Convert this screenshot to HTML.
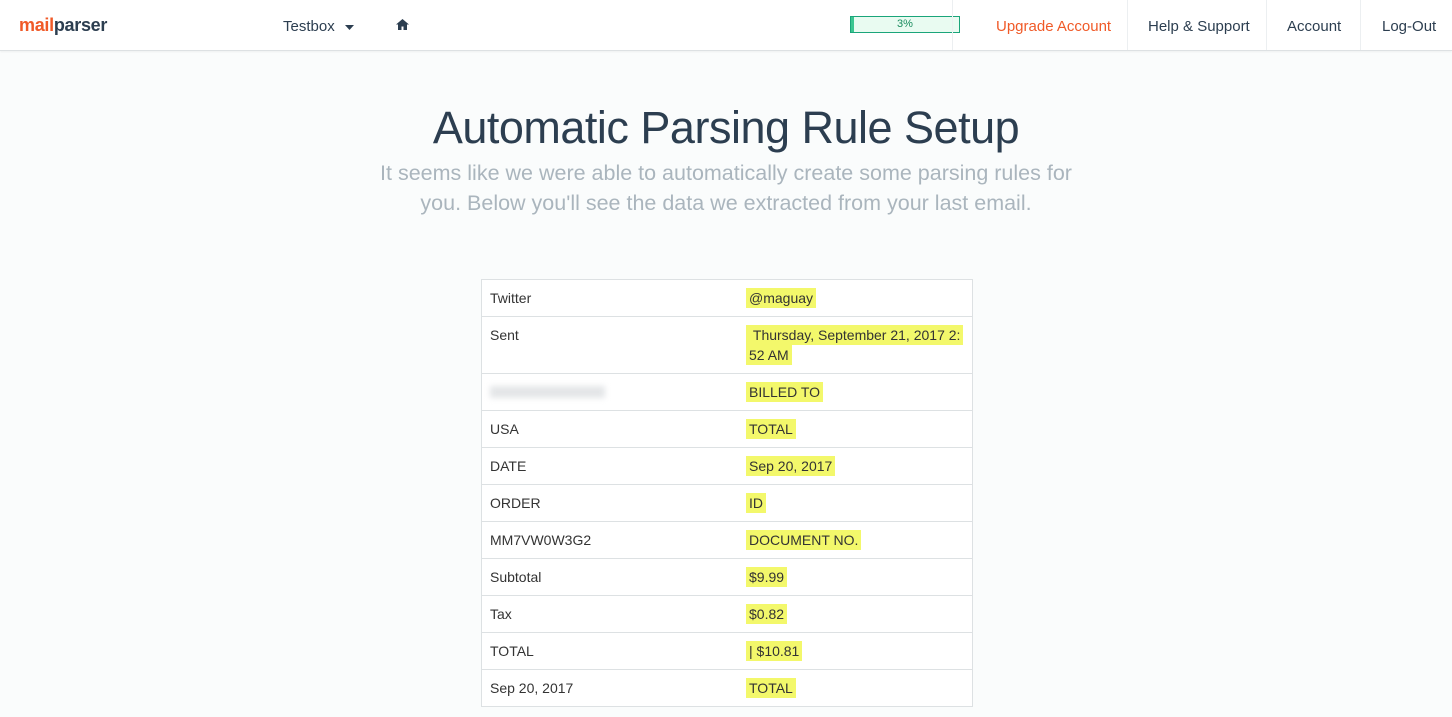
<!DOCTYPE html>
<html><head><meta charset="utf-8"><style>
body{margin:0;background:#fafcfc;font-family:"Liberation Sans",sans-serif;width:1452px;height:717px;overflow:hidden;position:relative}
.nav{position:absolute;left:0;top:0;width:1452px;height:50px;background:#fff;border-bottom:1px solid #dde1e3;box-shadow:0 1px 2px rgba(0,0,0,.05)}
.nav span{position:absolute;top:18px;font-size:15px;color:#2c3e50}
.logo{position:absolute;left:19px;top:15px;font-size:18px;font-weight:bold;letter-spacing:-0.3px}
.sep{position:absolute;top:0;width:1px;height:50px;background:#eceff1}
h1{position:absolute;top:102px;left:0;width:1452px;text-align:center;margin:0;font-size:45px;font-weight:normal;color:#2c3e50;letter-spacing:-0.5px}
.sub{position:absolute;top:158px;left:366px;width:720px;text-align:center;font-size:21.5px;line-height:30px;color:#aab5bd}
table{position:absolute;left:481px;top:279px;width:492px;border-collapse:collapse;background:#fff;font-size:14px;color:#333}
td{border-top:1px solid #dde1e3;border-bottom:1px solid #dde1e3;padding:8px 8px 0;height:28px;vertical-align:top;line-height:20px}
td:first-child{width:240px;border-left:1px solid #dde1e3}
td:last-child{border-right:1px solid #dde1e3}
.h{background:#f3f86b;padding:2px 3px}
</style></head><body>
<div class="nav">
<div class="logo"><span style="position:static;color:#f05a28;font-size:18px;font-weight:bold">mail</span><span style="position:static;color:#2c3e50;font-size:18px;font-weight:bold">parser</span></div>
<span style="left:283px">Testbox</span>
<svg style="position:absolute;left:345px;top:25px" width="9" height="5"><path d="M0 0h9L4.5 5z" fill="#2c3e50"/></svg>
<svg style="position:absolute;left:396px;top:19px" width="13" height="11" viewBox="0 0 13 11"><path d="M6.5 0L0 5.5h2V11h3.5V7.5h2V11H11V5.5h2z" fill="#2c3e50"/></svg>
<div style="position:absolute;left:850px;top:16px;width:108px;height:15px;border:1px solid #1aa57a;background:#e9fbf1;font-size:11px;color:#1a8b5e;text-align:center;line-height:15px"><div style="position:absolute;left:0;top:0;width:3px;height:15px;background:#3cc691"></div>3%</div>
<div class="sep" style="left:952px"></div>
<span style="left:996px;color:#f05a28">Upgrade Account</span>
<div class="sep" style="left:1127px"></div>
<span style="left:1148px">Help &amp; Support</span>
<div class="sep" style="left:1266px"></div>
<span style="left:1287px">Account</span>
<div class="sep" style="left:1360px"></div>
<span style="left:1382px">Log-Out</span>
</div>
<h1>Automatic Parsing Rule Setup</h1>
<div class="sub">It seems like we were able to automatically create some parsing rules for you. Below you'll see the data we extracted from your last email.</div>
<table>
<tr><td>Twitter</td><td><span class="h">@maguay</span></td></tr>
<tr><td style="height:48px">Sent</td><td><span class="h">&nbsp;Thursday, September 21, 2017 2:</span><br><span class="h">52 AM</span></td></tr>
<tr><td><div style="width:115px;height:12px;margin-top:4px;background:#e4e6e8;filter:blur(3px)"></div></td><td><span class="h">BILLED TO</span></td></tr>
<tr><td>USA</td><td><span class="h">TOTAL</span></td></tr>
<tr><td>DATE</td><td><span class="h">Sep 20, 2017</span></td></tr>
<tr><td>ORDER</td><td><span class="h">ID</span></td></tr>
<tr><td>MM7VW0W3G2</td><td><span class="h">DOCUMENT NO.</span></td></tr>
<tr><td>Subtotal</td><td><span class="h">$9.99</span></td></tr>
<tr><td>Tax</td><td><span class="h">$0.82</span></td></tr>
<tr><td>TOTAL</td><td><span class="h">| $10.81</span></td></tr>
<tr><td>Sep 20, 2017</td><td><span class="h">TOTAL</span></td></tr>
</table>
</body></html>
